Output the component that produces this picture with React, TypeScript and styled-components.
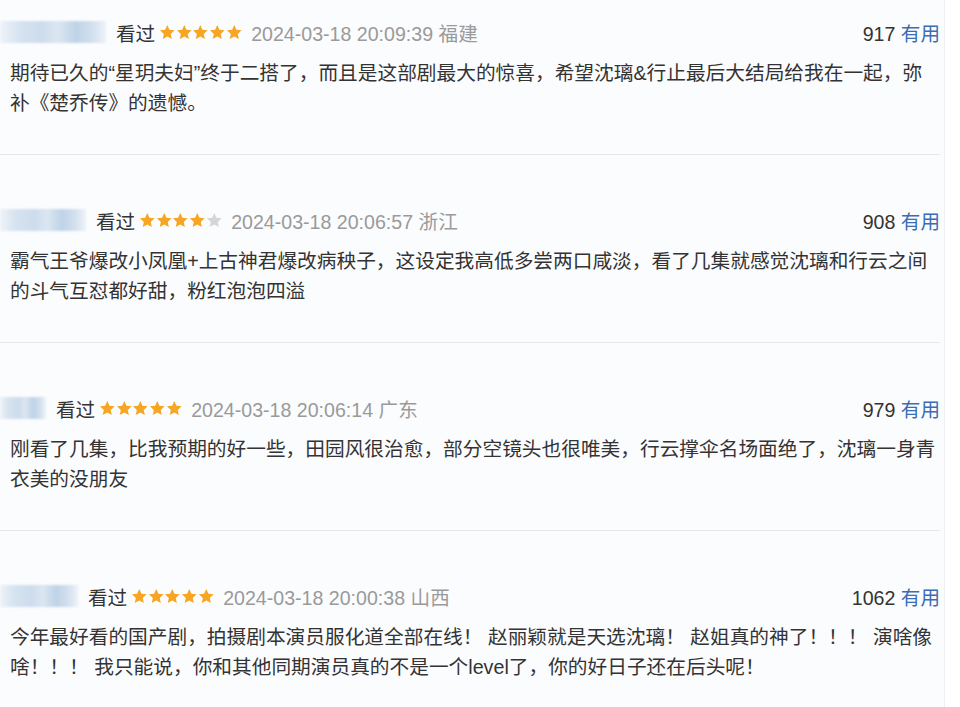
import React from 'react'
import styled, { createGlobalStyle } from 'styled-components'

interface Review {
  nameWidth: number
  rating: number
  time: string
  region: string
  votes: number
  text: string
}

const reviews: Review[] = [
  {
    nameWidth: 106,
    rating: 5,
    time: '2024-03-18 20:09:39',
    region: '福建',
    votes: 917,
    text: '期待已久的“星玥夫妇”终于二搭了，而且是这部剧最大的惊喜，希望沈璃&行止最后大结局给我在一起，弥补《楚乔传》的遗憾。',
  },
  {
    nameWidth: 86,
    rating: 4,
    time: '2024-03-18 20:06:57',
    region: '浙江',
    votes: 908,
    text: '霸气王爷爆改小凤凰+上古神君爆改病秧子，这设定我高低多尝两口咸淡，看了几集就感觉沈璃和行云之间的斗气互怼都好甜，粉红泡泡四溢',
  },
  {
    nameWidth: 46,
    rating: 5,
    time: '2024-03-18 20:06:14',
    region: '广东',
    votes: 979,
    text: '刚看了几集，比我预期的好一些，田园风很治愈，部分空镜头也很唯美，行云撑伞名场面绝了，沈璃一身青衣美的没朋友',
  },
  {
    nameWidth: 78,
    rating: 5,
    time: '2024-03-18 20:00:38',
    region: '山西',
    votes: 1062,
    text: '今年最好看的国产剧，拍摄剧本演员服化道全部在线！ 赵丽颖就是天选沈璃！ 赵姐真的神了！！！ 演啥像啥！！！ 我只能说，你和其他同期演员真的不是一个level了，你的好日子还在后头呢！',
  },
]

const Star = ({ on }: { on: boolean }) => (
  <S.StarSvg viewBox="0 0 24 24" $on={on}>
    <polygon points="12,1.5 15.1,8.4 22.6,9.2 17,14.3 18.6,21.7 12,17.9 5.4,21.7 7,14.3 1.4,9.2 8.9,8.4" />
  </S.StarSvg>
)

const App = () => {
  return (
    <>
      <GlobalStyle />
      <S.Page>
        <S.Card>
          {reviews.map((r, i) => (
            <S.Item key={i}>
              <S.Header>
                <S.Left>
                  <S.Mosaic $w={r.nameWidth} />
                  <S.Watched>看过</S.Watched>
                  <S.Stars>
                    {[0, 1, 2, 3, 4].map((n) => (
                      <Star key={n} on={n < r.rating} />
                    ))}
                  </S.Stars>
                  <S.Meta>
                    {r.time} {r.region}
                  </S.Meta>
                </S.Left>
                <S.Votes>
                  {r.votes} <S.Useful>有用</S.Useful>
                </S.Votes>
              </S.Header>
              <S.Body>{r.text}</S.Body>
            </S.Item>
          ))}
        </S.Card>
      </S.Page>
    </>
  )
}

export default App

const GlobalStyle = createGlobalStyle`
  html, body {
    margin: 0;
    padding: 0;
    background: #ffffff;
  }
  body {
    font-family: "Liberation Sans", "Noto Sans CJK SC", sans-serif;
  }
`

const S = {
  Page: styled.div`
    width: 960px;
    height: 707px;
    overflow: hidden;
    background: #ffffff;
  `,
  Card: styled.div`
    width: 945px;
    min-height: 707px;
    background: #fbfcfe;
    border-right: 1px solid #eceff4;
    box-sizing: border-box;
  `,
  Item: styled.div`
    padding: 50px 0 36px 10px;
    margin-right: 4px;
    border-bottom: 1px solid #e5e8ed;

    &:first-child {
      padding-top: 17px;
    }
  `,
  Header: styled.div`
    display: flex;
    align-items: center;
    justify-content: space-between;
    height: 30px;
    font-size: 19.6px;
  `,
  Left: styled.div`
    display: flex;
    align-items: center;
  `,
  Mosaic: styled.div<{ $w: number }>`
    width: ${(p) => p.$w}px;
    height: 22px;
    margin-left: -10px;
    margin-right: 10px;
    background: linear-gradient(
      90deg,
      #eef3f8 0%,
      #d6e3f0 18%,
      #cddcec 40%,
      #dbe6f1 55%,
      #bfd3e8 72%,
      #d4e1ee 88%,
      #eef3f8 100%
    );
    filter: blur(1px);
  `,
  Watched: styled.span`
    color: #333333;
  `,
  Stars: styled.span`
    display: flex;
    margin: 0 9px 0 4px;
  `,
  StarSvg: styled.svg<{ $on: boolean }>`
    width: 16.6px;
    height: 16.6px;
    fill: ${(p) => (p.$on ? '#f6a623' : '#d5d5d5')};
  `,
  Meta: styled.span`
    color: #9a9a9a;
  `,
  Votes: styled.span`
    color: #333333;
  `,
  Useful: styled.span`
    color: #3a6db3;
  `,
  Body: styled.div`
    margin-top: 11px;
    width: 930px;
    font-size: 19.7px;
    line-height: 30px;
    color: #333333;
  `,
}
